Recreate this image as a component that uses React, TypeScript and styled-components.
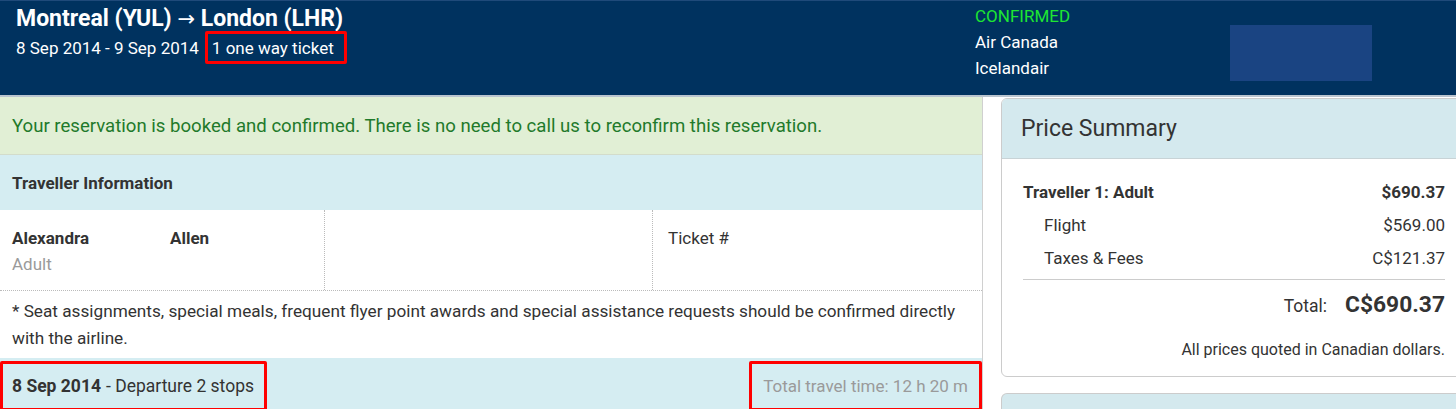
import { FC } from "react";
import styled, { createGlobalStyle } from "styled-components";

const GlobalStyle = createGlobalStyle`
html, body {
    margin: 0;
    padding: 0;
    background: #ffffff;
    overflow: hidden;
}
body {
    font-family: Roboto, "Liberation Sans", Arial, sans-serif;
    color: #333333;
}
* { box-sizing: border-box; }
`;

const Page = styled.div`
width: 1456px;
height: 409px;
overflow: hidden;
display: flex;
flex-direction: column;
`;

const TopBar = styled.div`
height: 97px;
flex-shrink: 0;
background: #00325f;
border-top: 1px solid #1f4a7a;
border-bottom: 2px solid #b9c4cf;
display: flex;
padding: 0 16px;
`;

const TripInfo = styled.div`
width: 959px;
padding-top: 5px;
& > h1 {
    margin: 0;
    font-size: 23px;
    font-weight: 700;
    color: #ffffff;
    line-height: 26px;
}
`;

const Arrow = styled.span`
font-family: "DejaVu Sans", sans-serif;
font-weight: 400;
font-size: 21px;
`;

const SubLine = styled.div`
display: flex;
align-items: center;
color: #ffffff;
font-size: 17px;
margin-top: -1px;
`;

const Highlight = styled.span<{ $width: number; $height: number }>`
display: inline-flex;
align-items: center;
flex-shrink: 0;
width: ${p => p.$width}px;
height: ${p => p.$height}px;
border: 3px solid #ff0000;
border-radius: 2px;
white-space: nowrap;
`;

const TicketBox = styled(Highlight)`
margin-left: 6px;
padding-left: 4px;
`;

const Carriers = styled.div`
width: 255px;
padding-top: 2px;
display: flex;
flex-direction: column;
& > span {
    color: #ffffff;
    font-size: 17px;
    line-height: 26px;
}
`;

const Status = styled.span`
color: #1ee632 !important;
`;

const LogoSlot = styled.div`
width: 142px;
height: 56px;
margin-top: 24px;
background: #1a4482;
`;

const Body = styled.div`
display: flex;
flex: 1;
gap: 18px;
`;

const MainColumn = styled.div`
width: 983px;
flex-shrink: 0;
border-right: 1px solid #d0d0d0;
display: flex;
flex-direction: column;
`;

const ConfirmBanner = styled.div`
height: 58px;
background: #e1efd5;
border-bottom: 1px solid #d3dccb;
color: #1f7a2b;
font-size: 18.6px;
display: flex;
align-items: center;
padding-left: 12px;
`;

const SectionBar = styled.div`
height: 55px;
flex-shrink: 0;
background: #d5edf2;
display: flex;
align-items: center;
justify-content: space-between;
font-size: 17px;
`;

const SectionTitle = styled.div`
font-weight: 700;
padding-left: 12px;
`;

const TravellerRow = styled.div`
display: grid;
grid-template-columns: 325px 328px 1fr;
height: 81px;
border-bottom: 1px dotted #bbbbbb;
`;

const Cell = styled.div<{ $divider?: boolean }>`
padding: 15px 12px 0 12px;
font-size: 17px;
line-height: 26px;
border-right: ${p => (p.$divider ? "1px dotted #bbbbbb" : "none")};
`;

const NameLine = styled.div`
display: flex;
font-weight: 700;
& > span:first-child {
    width: 158px;
}
`;

const PaxType = styled.div`
color: #9a9a9a;
`;

const TicketLabel = styled.div`
padding-left: 3px;
`;

const Note = styled.p`
margin: 0;
padding: 7px 12px 6px 12px;
font-size: 17.2px;
line-height: 27px;
`;

const DepartureBox = styled(Highlight)`
padding-left: 9px;
font-size: 17.5px;
& > b { margin-right: 5px; }
`;

const TravelTimeBox = styled(Highlight)`
justify-content: flex-end;
padding-right: 11px;
color: #9a9a9a;
font-size: 17px;
`;

const SideColumn = styled.div`
flex: 1;
padding-top: 1px;
display: flex;
flex-direction: column;
gap: 16px;
margin-right: -20px;
`;

const Card = styled.div`
border: 1px solid #cccccc;
border-radius: 6px;
overflow: hidden;
background: #ffffff;
`;

const CardHeader = styled.div`
height: 60px;
background: #d4e9ee;
border-bottom: 1px solid #c8d3d6;
display: flex;
align-items: center;
padding-left: 19px;
font-size: 23px;
color: #333333;
`;

const CardBody = styled.div`
padding: 17px 30px 17px 21px;
font-size: 17px;
`;

const PriceRow = styled.div<{ $indent?: boolean; $bold?: boolean }>`
display: flex;
justify-content: space-between;
line-height: 33px;
padding-left: ${p => (p.$indent ? "21px" : "0")};
font-weight: ${p => (p.$bold ? 700 : 400)};
`;

const Rule = styled.div`
height: 1px;
background: #cccccc;
margin-top: 4px;
`;

const TotalRow = styled.div`
display: flex;
justify-content: flex-end;
align-items: baseline;
gap: 18px;
margin-top: 11px;
font-size: 17.5px;
line-height: 27px;
& > b {
    font-size: 22.8px;
}
`;

const Footnote = styled.div`
text-align: right;
font-size: 16px;
line-height: 19px;
margin-top: 20px;
`;

const NextCard = styled.div`
height: 40px;
border: 1px solid #cccccc;
border-bottom: none;
border-radius: 6px 6px 0 0;
background: #d4e9ee;
`;

export const App: FC = () => {
    return (
        <>
            <GlobalStyle />
            <Page>
                <TopBar>
                    <TripInfo>
                        <h1>Montreal (YUL) <Arrow>→</Arrow> London (LHR)</h1>
                        <SubLine>
                            <span>8 Sep 2014 - 9 Sep 2014</span>
                            <TicketBox $width={142} $height={33}>1 one way ticket</TicketBox>
                        </SubLine>
                    </TripInfo>
                    <Carriers>
                        <Status>CONFIRMED</Status>
                        <span>Air Canada</span>
                        <span>Icelandair</span>
                    </Carriers>
                    <LogoSlot />
                </TopBar>
                <Body>
                    <MainColumn>
                        <ConfirmBanner>
                            Your reservation is booked and confirmed. There is no need to call us to reconfirm this reservation.
                        </ConfirmBanner>
                        <SectionBar>
                            <SectionTitle>Traveller Information</SectionTitle>
                        </SectionBar>
                        <TravellerRow>
                            <Cell $divider>
                                <NameLine>
                                    <span>Alexandra</span>
                                    <span>Allen</span>
                                </NameLine>
                                <PaxType>Adult</PaxType>
                            </Cell>
                            <Cell $divider />
                            <Cell>
                                <TicketLabel>Ticket #</TicketLabel>
                            </Cell>
                        </TravellerRow>
                        <Note>
                            * Seat assignments, special meals, frequent flyer point awards and special assistance requests should be confirmed directly with the airline.
                        </Note>
                        <SectionBar>
                            <DepartureBox $width={267} $height={50}>
                                <b>8 Sep 2014</b> - Departure 2 stops
                            </DepartureBox>
                            <TravelTimeBox $width={233} $height={50}>
                                Total travel time: 12 h 20 m
                            </TravelTimeBox>
                        </SectionBar>
                    </MainColumn>
                    <SideColumn>
                        <Card>
                            <CardHeader>Price Summary</CardHeader>
                            <CardBody>
                                <PriceRow $bold>
                                    <span>Traveller 1: Adult</span>
                                    <span>$690.37</span>
                                </PriceRow>
                                <PriceRow $indent>
                                    <span>Flight</span>
                                    <span>$569.00</span>
                                </PriceRow>
                                <PriceRow $indent>
                                    <span>Taxes &amp; Fees</span>
                                    <span>C$121.37</span>
                                </PriceRow>
                                <Rule />
                                <TotalRow>
                                    <span>Total:</span>
                                    <b>C$690.37</b>
                                </TotalRow>
                                <Footnote>All prices quoted in Canadian dollars.</Footnote>
                            </CardBody>
                        </Card>
                        <NextCard />
                    </SideColumn>
                </Body>
            </Page>
        </>
    );
};

export default App;
